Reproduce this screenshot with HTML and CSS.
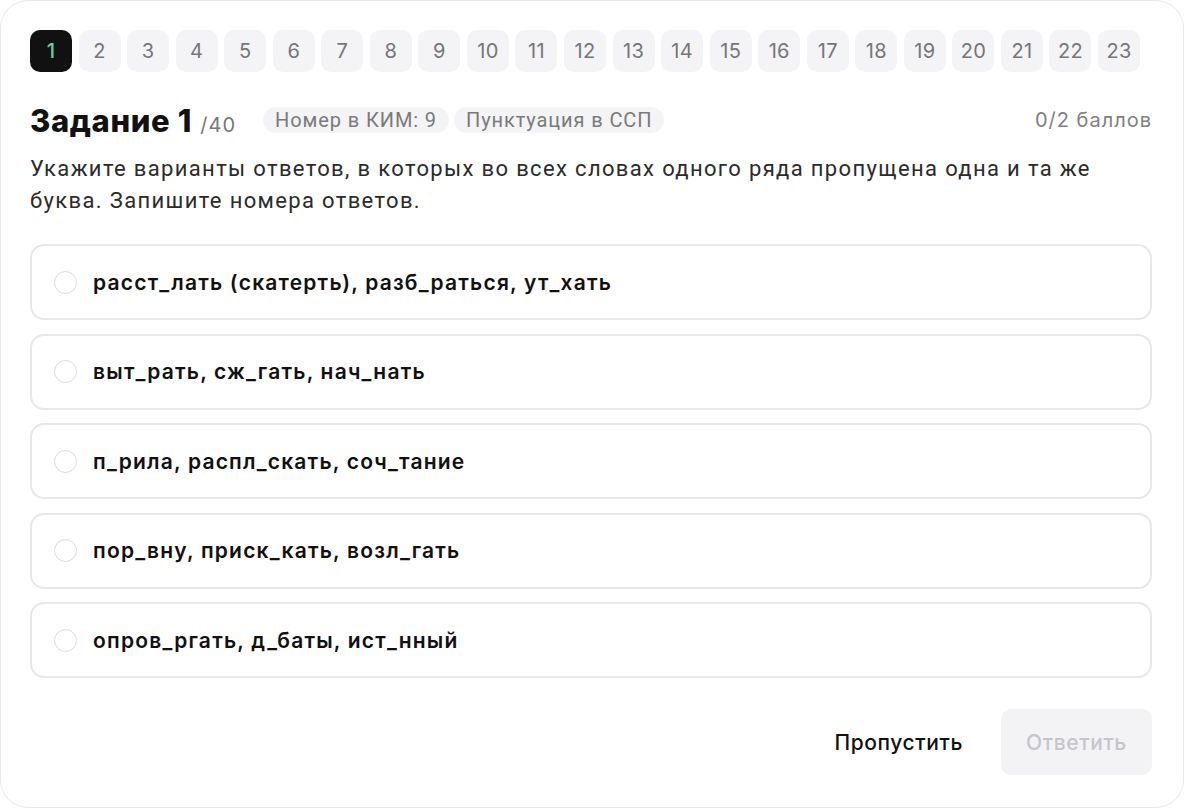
FILE: index.html
```html
<!DOCTYPE html>
<html lang="ru">
<head>
    <meta charset="UTF-8">
    <meta name="viewport" content="width=device-width, initial-scale=1.0">
    <title>Задание 1</title>
    <link rel="stylesheet" href="styles.css">
</head>
<body>
    <div class="card">
        <nav class="pager">
            <span class="page active">1</span>
            <span class="page">2</span>
            <span class="page">3</span>
            <span class="page">4</span>
            <span class="page">5</span>
            <span class="page">6</span>
            <span class="page">7</span>
            <span class="page">8</span>
            <span class="page">9</span>
            <span class="page">10</span>
            <span class="page">11</span>
            <span class="page">12</span>
            <span class="page">13</span>
            <span class="page">14</span>
            <span class="page">15</span>
            <span class="page">16</span>
            <span class="page">17</span>
            <span class="page">18</span>
            <span class="page">19</span>
            <span class="page">20</span>
            <span class="page">21</span>
            <span class="page">22</span>
            <span class="page">23</span>
        </nav>

        <div class="task-head">
            <h1 class="task-title">Задание 1 <span class="task-total">/40</span></h1>
            <span class="chip">Номер в КИМ: 9</span>
            <span class="chip">Пунктуация в ССП</span>
            <span class="score">0/2 баллов</span>
        </div>

        <p class="task-text">Укажите варианты ответов, в которых во всех словах одного ряда пропущена одна и та же буква. Запишите номера ответов.</p>

        <div class="options">
            <label class="option"><span class="radio"></span>расст_лать (скатерть), разб_раться, ут_хать</label>
            <label class="option"><span class="radio"></span>выт_рать, сж_гать, нач_нать</label>
            <label class="option"><span class="radio"></span>п_рила, распл_скать, соч_тание</label>
            <label class="option"><span class="radio"></span>пор_вну, приск_кать, возл_гать</label>
            <label class="option"><span class="radio"></span>опров_ргать, д_баты, ист_нный</label>
        </div>

        <div class="actions">
            <button class="skip-button">Пропустить</button>
            <button class="answer-button" disabled>Ответить</button>
        </div>
    </div>
</body>
</html>
```

FILE: styles.css
```css
body {
    margin: 0;
    padding: 0;
    background-color: #fff;
    font-family: Inter, "Noto Sans", sans-serif;
    color: #111;
}
.card {
    width: 1184px;
    height: 808px;
    box-sizing: border-box;
    padding: 29px 31px 0 29px;
    border: 1px solid #e9e9ec;
    border-radius: 28px;
    background-color: #fff;
}
.pager {
    display: flex;
    gap: 6.55px;
}
.page {
    width: 42px;
    height: 42px;
    border-radius: 10px;
    background-color: #f4f3f6;
    color: #767676;
    font-size: 20px;
    letter-spacing: 0.3px;
    display: flex;
    align-items: center;
    justify-content: center;
}
.page.active {
    background-color: #111;
    color: #5fd3a3;
    font-weight: 500;
}
.task-head {
    display: flex;
    align-items: center;
    margin-top: 33px;
    height: 30px;
}
.task-title {
    margin: 0 27px 0 0;
    font-size: 31px;
    font-weight: 800;
    letter-spacing: 0.6px;
    color: #111;
}
.task-total {
    font-size: 20px;
    font-weight: 400;
    letter-spacing: 1px;
    color: #777;
    margin-left: 1px;
}
.chip {
    background-color: #f4f3f6;
    color: #7a7a7a;
    font-family: Roboto, sans-serif;
    font-size: 20px;
    letter-spacing: 0.9px;
    padding: 0 12px;
    height: 26px;
    line-height: 26px;
    border-radius: 13px;
    margin-right: 5px;
}
.score {
    margin-left: auto;
    color: #808080;
    font-size: 20px;
    letter-spacing: 1px;
}
.task-text {
    font-family: Roboto, sans-serif;
    font-size: 22px;
    letter-spacing: 1.35px;
    line-height: 32px;
    color: #2b2b2b;
    margin: 18px 0 27px;
}
.options {
    display: flex;
    flex-direction: column;
    gap: 13.5px;
}
.option {
    display: flex;
    align-items: center;
    height: 76px;
    box-sizing: border-box;
    border: 2px solid #e8e8ea;
    border-radius: 14px;
    padding-left: 22px;
    font-size: 21px;
    font-weight: 600;
    letter-spacing: 1.2px;
    color: #111;
    cursor: pointer;
}
.radio {
    width: 21px;
    height: 21px;
    border: 1.5px solid #dcdcdf;
    border-radius: 50%;
    margin-right: 16px;
    flex-shrink: 0;
}
.actions {
    display: flex;
    justify-content: flex-end;
    align-items: center;
    gap: 38px;
    margin-top: 31px;
}
.skip-button, .answer-button {
    font-family: Inter, "Noto Sans", sans-serif;
    font-size: 21px;
    font-weight: 500;
    letter-spacing: 0.6px;
    border: none;
    cursor: pointer;
}
.skip-button {
    background: none;
    color: #111;
    padding: 0;
}
.answer-button {
    width: 151px;
    height: 66px;
    border-radius: 10px;
    background-color: #f3f2f5;
    color: #c6c6ca;
    cursor: default;
}
```
